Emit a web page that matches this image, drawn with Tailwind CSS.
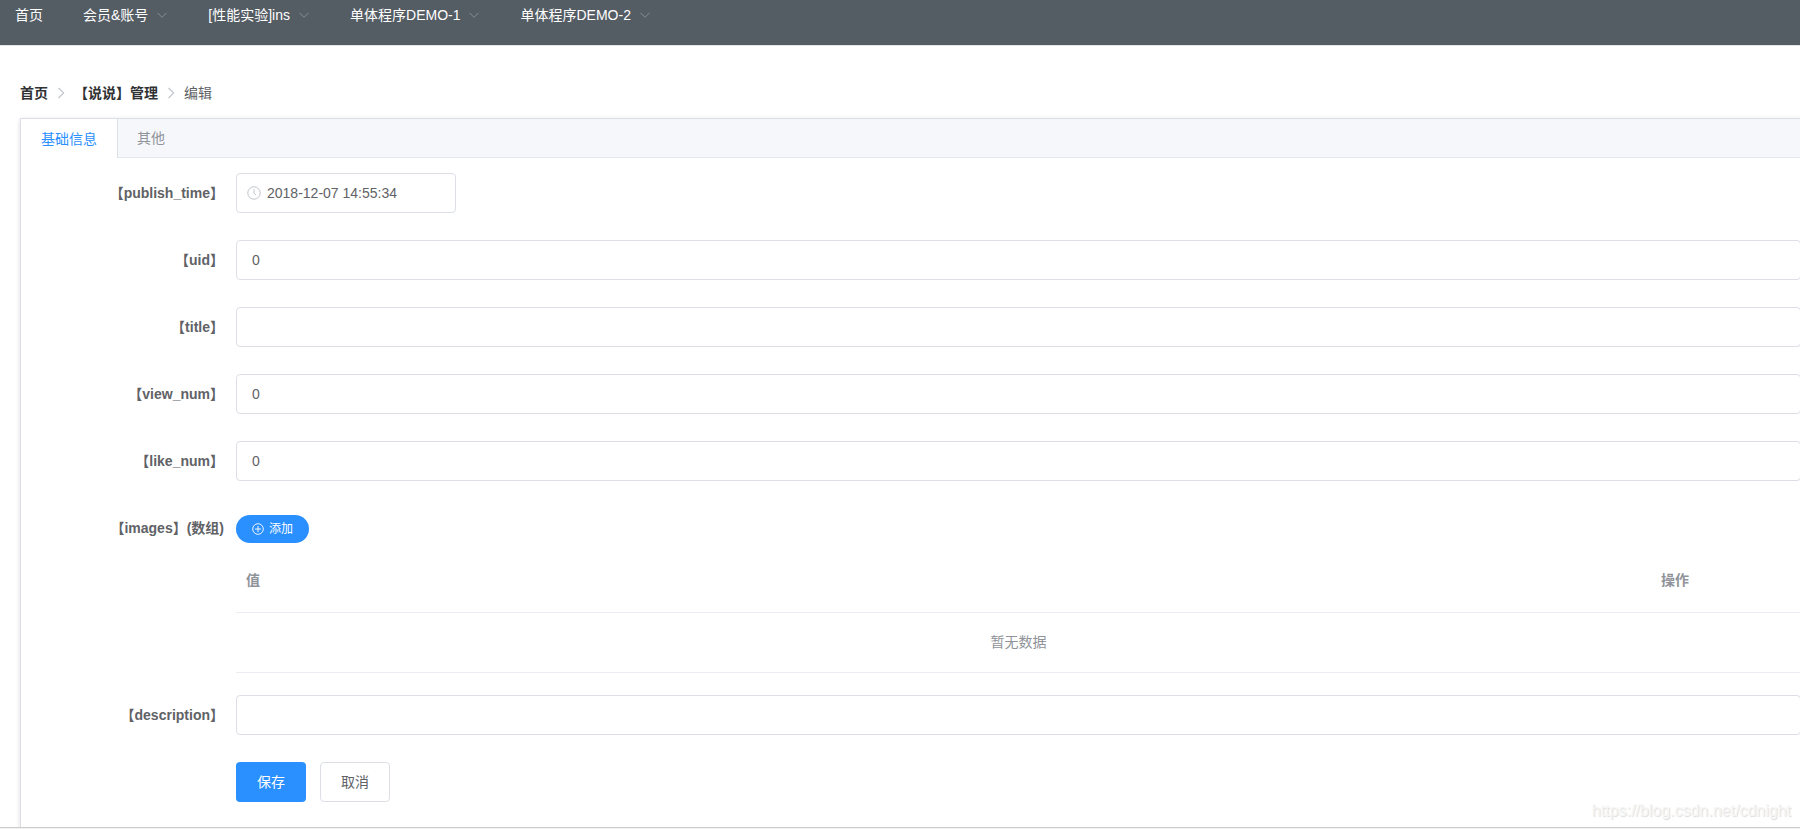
<!DOCTYPE html>
<html lang="zh-CN">
<head>
<meta charset="utf-8">
<title>编辑</title>
<script src="https://cdn.jsdelivr.net/npm/@tailwindcss/browser@4"></script>
</head>
<body class="bg-white font-['Liberation_Sans','Noto_Sans_CJK_SC',sans-serif] text-sm text-[#606266]">
<svg class="hidden" aria-hidden="true">
  <symbol id="down" viewBox="0 0 12 12"><path d="M1.500 3.800 6 8.300l4.500-4.500" fill="none" stroke="currentColor" stroke-width="0.9"/></symbol>
  <symbol id="right" viewBox="0 0 14 14"><path d="M4.500 2 9.700 7 4.500 12" fill="none" stroke="currentColor" stroke-width="1.100"/></symbol>
</svg>
<div class="flex min-h-screen flex-col overflow-hidden">
  <nav class="flex h-[46px] items-start gap-10 border-b border-[#e6e6e6] bg-[#545c64] px-[15px] pt-[5px] leading-5 text-white">
    <a href="#">首页</a>
    <a href="#" class="flex items-center gap-2">会员&amp;账号<svg class="size-3 text-[#909399]"><use href="#down"/></svg></a>
    <a href="#" class="flex items-center gap-2">[性能实验]ins<svg class="size-3 text-[#909399]"><use href="#down"/></svg></a>
    <a href="#" class="flex items-center gap-2">单体程序DEMO-1<svg class="size-3 text-[#909399]"><use href="#down"/></svg></a>
    <a href="#" class="flex items-center gap-2">单体程序DEMO-2<svg class="size-3 text-[#909399]"><use href="#down"/></svg></a>
  </nav>

  <div class="mt-[37px] flex items-center gap-1.5 px-5 leading-5">
    <a href="#" class="font-bold text-[#303133]">首页</a>
    <svg class="size-3.5 text-[#c0c4cc]"><use href="#right"/></svg>
    <a href="#" class="font-bold text-[#303133]">【说说】管理</a>
    <svg class="size-3.5 text-[#c0c4cc]"><use href="#right"/></svg>
    <span>编辑</span>
  </div>

  <main class="-mr-[17px] ml-5 mt-[15px] flex-1 border border-b-0 border-[#dcdfe6] bg-white shadow-[0_2px_4px_0_rgba(0,0,0,0.12),0_0_6px_0_rgba(0,0,0,0.04)]">
    <div class="flex h-[39px] border-b border-[#e4e7ed] bg-[#f5f7fa]" role="tablist">
      <button type="button" role="tab" aria-selected="true" class="-mb-px border-r border-[#dcdfe6] bg-white px-5 text-[#2a8fff]">基础信息</button>
      <button type="button" role="tab" aria-selected="false" class="-ml-px px-5 text-[#909399]">其他</button>
    </div>

    <form class="px-[15px] pb-[25px] pt-[15px]">
      <div class="mb-[27px] flex">
        <label for="publish_time" class="w-[200px] shrink-0 pr-3 text-right font-bold leading-10">【publish_time】</label>
        <div class="flex h-10 w-[220px] items-center gap-1.5 rounded border border-[#dcdfe6] pl-[10px]">
          <svg class="size-[14px] shrink-0 text-[#c0c4cc]" viewBox="0 0 14 14" fill="none" stroke="currentColor"><circle cx="7" cy="7" r="6.200"/><path d="M7 3.200V7.200L9 9"/></svg>
          <input id="publish_time" type="text" value="2018-12-07 14:55:34" class="h-full min-w-0 flex-1 outline-none">
        </div>
      </div>
      <div class="mb-[27px] flex">
        <label for="uid" class="w-[200px] shrink-0 pr-3 text-right font-bold leading-10">【uid】</label>
        <input id="uid" type="text" value="0" class="h-10 flex-1 rounded border border-[#dcdfe6] px-[15px] outline-none">
      </div>
      <div class="mb-[27px] flex">
        <label for="title" class="w-[200px] shrink-0 pr-3 text-right font-bold leading-10">【title】</label>
        <input id="title" type="text" class="h-10 flex-1 rounded border border-[#dcdfe6] px-[15px] outline-none">
      </div>
      <div class="mb-[27px] flex">
        <label for="view_num" class="w-[200px] shrink-0 pr-3 text-right font-bold leading-10">【view_num】</label>
        <input id="view_num" type="text" value="0" class="h-10 flex-1 rounded border border-[#dcdfe6] px-[15px] outline-none">
      </div>
      <div class="mb-[27px] flex">
        <label for="like_num" class="w-[200px] shrink-0 pr-3 text-right font-bold leading-10">【like_num】</label>
        <input id="like_num" type="text" value="0" class="h-10 flex-1 rounded border border-[#dcdfe6] px-[15px] outline-none">
      </div>
      <div class="mb-[22px] flex">
        <label for="add_image" class="w-[200px] shrink-0 pr-3 text-right font-bold leading-10">【images】(数组)</label>
        <div class="flex-1 pt-[7px]">
          <button id="add_image" type="button" class="flex h-7 items-center gap-[5px] rounded-full bg-[#2a8fff] px-4 text-xs text-white">
            <svg class="size-3" viewBox="0 0 12 12" fill="none" stroke="currentColor" stroke-width="0.9"><circle cx="6" cy="6" r="5.300"/><path d="M6 3V9M3 6H9"/></svg>添加
          </button>
          <table class="mt-[5px] w-full table-fixed border-collapse text-[#909399]">
            <thead>
              <tr class="h-16 border-b border-[#ebeef5]">
                <th class="px-[10px] text-left">值</th>
                <th class="w-[150px] px-[10px] text-left">操作</th>
              </tr>
            </thead>
            <tbody>
              <tr class="h-[60px] border-b border-[#ebeef5]"><td colspan="2" class="text-center">暂无数据</td></tr>
            </tbody>
          </table>
        </div>
      </div>
      <div class="mb-[27px] flex">
        <label for="description" class="w-[200px] shrink-0 pr-3 text-right font-bold leading-10">【description】</label>
        <input id="description" type="text" class="h-10 flex-1 rounded border border-[#dcdfe6] px-[15px] outline-none">
      </div>
      <div class="flex gap-[14px] pl-[200px]">
        <button type="submit" class="h-10 rounded bg-[#2a8fff] px-[21px] text-white">保存</button>
        <button type="button" class="h-10 rounded border border-[#dcdfe6] px-5">取消</button>
      </div>
    </form>
  </main>
  <div class="relative z-10 h-0.5 border-t border-[#cdcdcd] bg-[#f1f1f1]"></div>
</div>
<div class="absolute bottom-2 right-[9px] z-20 text-base leading-5 text-[#f6f6f6] [text-shadow:1px_1px_1px_#dcdcdc]">https://blog.csdn.net/cdnight</div>
</body>
</html>
